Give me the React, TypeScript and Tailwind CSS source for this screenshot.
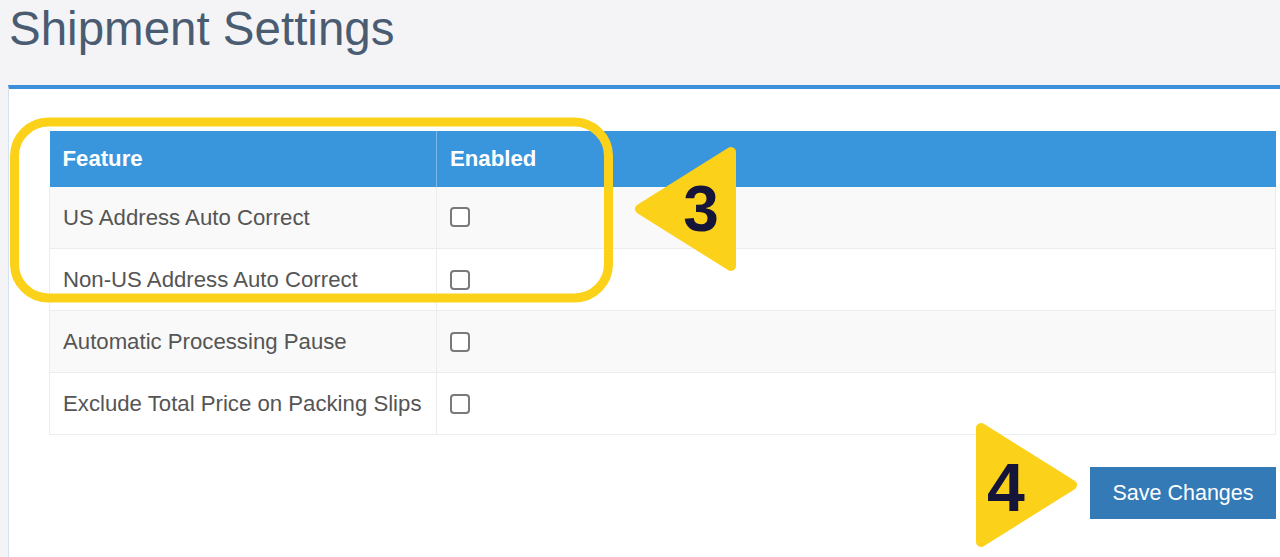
import React from "react";

const rows = [
  "US Address Auto Correct",
  "Non-US Address Auto Correct",
  "Automatic Processing Pause",
  "Exclude Total Price on Packing Slips",
];

export default function App() {
  return (
    <div className="relative h-[557px] overflow-hidden bg-[#f4f4f6] font-['Liberation_Sans',Arial,sans-serif]">
      <h1 className="pl-[9px] pt-[5px] text-[47.5px] leading-none text-[#4a5c72]">
        Shipment Settings
      </h1>
      <div className="mt-[32px] ml-[8px] border-t-4 border-t-[#3c8fdb] border-l border-l-[#d3e2f0] bg-white pl-[40px] pt-[42px] pb-[60px]">
        <table className="w-[1227px] border-collapse text-[22.2px] text-[#555]">
          <thead>
            <tr className="h-[56px] bg-[#3996dc] text-left text-white">
              <th className="w-[387px] border-r border-r-[#7db9ea] pl-[13px] font-bold">Feature</th>
              <th className="pl-[13px] font-bold">Enabled</th>
            </tr>
          </thead>
          <tbody>
            {rows.map((r, i) => (
              <tr
                key={r}
                className={`h-[62px] border-b border-b-[#ececec] ${i % 2 === 0 ? "bg-[#f9f9f9]" : "bg-white"}`}
              >
                <td className="border-l border-l-[#ececec] border-r border-r-[#ececec] pl-[13px]">{r}</td>
                <td className="border-r border-r-[#ececec] pl-[13px]">
                  <span className="block h-[20px] w-[20px] rounded-[4px] border-2 border-[#7a7a7a] bg-white" />
                </td>
              </tr>
            ))}
          </tbody>
        </table>
        <div className="mt-[32px] flex w-[1227px] justify-end">
          <button className="h-[52px] w-[186px] bg-[#337ab7] text-[21.5px] text-white">
            Save Changes
          </button>
        </div>
      </div>

      <svg
        className="pointer-events-none absolute left-0 top-0"
        width="1280"
        height="557"
        viewBox="0 0 1280 557"
      >
        <rect
          x="14.5"
          y="122"
          width="594"
          height="176"
          rx="34"
          fill="none"
          stroke="#fbd11a"
          strokeWidth="9"
        />
        <polygon
          points="640,209 731,152 731,266"
          fill="#fbd11a"
          stroke="#fbd11a"
          strokeWidth="10"
          strokeLinejoin="round"
        />
        <polygon
          points="981,428 981,542 1072,485"
          fill="#fbd11a"
          stroke="#fbd11a"
          strokeWidth="10"
          strokeLinejoin="round"
        />
        <text
          x="701"
          y="231"
          textAnchor="middle"
          fontFamily="'Liberation Sans', Arial, sans-serif"
          fontWeight="bold"
          fontSize="64"
          fill="#15153a"
        >
          3
        </text>
        <text
          x="1006"
          y="511"
          textAnchor="middle"
          fontFamily="'Liberation Sans', Arial, sans-serif"
          fontWeight="bold"
          fontSize="68"
          fill="#15153a"
        >
          4
        </text>
      </svg>
    </div>
  );
}
